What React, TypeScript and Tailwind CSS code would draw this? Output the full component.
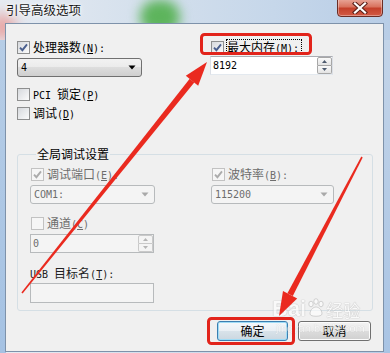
import React from "react";

const CJK = "font-['Noto_Sans_CJK_SC',sans-serif] text-[12px] leading-[14px]";
const LAT = "font-['DejaVu_Sans_Mono',monospace] text-[10px] leading-[14px]";

function Txt({ t, className = "" }: { t: string; className?: string }) {
  const toks: { s: string; c: boolean; u: boolean }[] = [];
  for (let i = 0; i < t.length; i++) {
    let ch = t[i];
    let u = false;
    if (ch === "&" && i + 1 < t.length) {
      i++;
      ch = t[i];
      u = true;
    }
    const c = /[\u2e80-\u9fff\uff00-\uffef]/.test(ch);
    const last = toks[toks.length - 1];
    if (last && last.c === c && last.u === u) last.s += ch;
    else toks.push({ s: ch, c, u });
  }
  return (
    <span className={`whitespace-pre leading-[14px] ${className}`}>
      {toks.map((k, i) => (
        <span key={i} className={`${k.c ? CJK : LAT} ${k.u ? "underline underline-offset-[1px]" : ""}`}>
          {k.s}
        </span>
      ))}
    </span>
  );
}

function Check({ on, dis }: { on?: boolean; dis?: boolean }) {
  return (
    <span
      className={`shrink-0 w-[13px] h-[13px] border flex items-center justify-center ${
        dis
          ? "border-[#c2c2c2] bg-[#f6f6f6]"
          : "border-[#8e8f8f] bg-[linear-gradient(135deg,#d6d9dd,#fbfbfb)]"
      }`}
    >
      {on && (
        <svg width="11" height="11" viewBox="0 0 11 11">
          <path
            d="M2 5.6 L4.4 8.2 L9 2.4"
            fill="none"
            stroke={dis ? "#acacac" : "#4a5f8e"}
            strokeWidth="1.9"
          />
        </svg>
      )}
    </span>
  );
}

function CheckRow({ t, on, dis, focus }: { t: string; on?: boolean; dis?: boolean; focus?: boolean }) {
  return (
    <div className="flex items-center h-[13px] gap-[3px]">
      <Check on={on} dis={dis} />
      <Txt
        t={t}
        className={`${dis ? "text-[#6d6d6d]" : "text-black"} ${
          focus ? "outline outline-1 outline-dotted outline-black pr-[2px]" : ""
        }`}
      />
    </div>
  );
}

function Arrow({ color }: { color: string }) {
  return (
    <svg width="8" height="5" viewBox="0 0 8 5">
      <path d="M0.5 0.5 H7.5 L4 4.5 Z" fill={color} />
    </svg>
  );
}

function Combo({ v, w, dis }: { v: string; w: string; dis?: boolean }) {
  return (
    <div
      className={`${w} h-[19px] rounded-[3px] border flex items-center justify-between pl-[3px] pr-[5px] ${
        dis
          ? "border-[#b7babc] bg-[#f4f4f4] text-[#6d6d6d]"
          : "border-[#707070] bg-[linear-gradient(#f2f2f2_0%,#ebebeb_50%,#dddddd_50%,#cfcfcf_100%)] text-black"
      }`}
    >
      <Txt t={v} />
      <Arrow color={dis ? "#a9a9a9" : "#000"} />
    </div>
  );
}

function SpinBtns({ dis }: { dis?: boolean }) {
  const b = dis
    ? "border-[#c9c9c9] bg-[#f4f4f4]"
    : "border-[#a7a7a7] bg-[linear-gradient(#fafafa,#e3e3e3)]";
  const c = dis ? "#b5b5b5" : "#4d5a6e";
  return (
    <div className="flex flex-col w-[15px] h-full">
      <div className={`flex-1 border rounded-t-[2px] flex items-center justify-center ${b}`}>
        <svg width="5" height="3" viewBox="0 0 5 3">
          <path d="M0 3 L2.5 0 L5 3 Z" fill={c} />
        </svg>
      </div>
      <div className={`flex-1 border border-t-0 rounded-b-[2px] flex items-center justify-center ${b}`}>
        <svg width="5" height="3" viewBox="0 0 5 3">
          <path d="M0 0 L5 0 L2.5 3 Z" fill={c} />
        </svg>
      </div>
    </div>
  );
}

function Spinner({ v, w, dis }: { v: string; w: string; dis?: boolean }) {
  return (
    <div
      className={`${w} h-[19px] border flex items-stretch ${
        dis
          ? "border-[#b7babc] bg-[#f4f4f4] text-[#6d6d6d]"
          : "border-[#abadb3] border-l-[#dbdfe6] border-r-[#dbdfe6] border-b-[#e3e9ef] bg-white text-black"
      }`}
    >
      <div className="flex-1 flex items-center pl-[2px]">
        <Txt t={v} />
      </div>
      <SpinBtns dis={dis} />
    </div>
  );
}

function Btn({ t, def, w }: { t: string; def?: boolean; w: string }) {
  return (
    <div
      className={`${w} h-[20px] rounded-[3px] border flex items-center justify-center ${
        def
          ? "border-[#3c7fb1] bg-[linear-gradient(#f4f8fb_0%,#e9eff4_50%,#d9e3ea_50%,#cbd7e0_100%)] shadow-[inset_0_0_0_1px_#9fdcf6]"
          : "border-[#707070] bg-[linear-gradient(#f2f2f2_0%,#ebebeb_50%,#dddddd_50%,#cfcfcf_100%)] shadow-[inset_0_0_0_1px_#fcfcfc]"
      }`}
    >
      <Txt t={t} className="text-black" />
    </div>
  );
}

function CloseBtn() {
  return (
    <div className="mr-[7px] -mt-[2px] w-[46px] h-[19px] rounded-b-[4px] border border-[#6b2c24] bg-[linear-gradient(#e9a89b_0%,#d9735f_45%,#c4402b_55%,#d25a44_100%)] shadow-[inset_0_0_0_1px_rgba(255,255,255,0.35)] flex items-center justify-center">
      <svg width="16" height="12" viewBox="0 0 16 12">
        <path d="M3 1.5 L13 10.5 M13 1.5 L3 10.5" stroke="#5a2019" strokeWidth="4.2" strokeLinecap="square" />
        <path d="M3 1.5 L13 10.5 M13 1.5 L3 10.5" stroke="#ffffff" strokeWidth="2.2" strokeLinecap="square" />
      </svg>
    </div>
  );
}

export default function App() {
  return (
    <div className="relative w-[390px] h-[353px] overflow-hidden text-[12px] leading-[14px] bg-[linear-gradient(90deg,#e6ebf2_0%,#d3dfec_40%,#c6d7ea_70%,#b8cde6_100%)]">
      {/* aero glass blur blobs */}
      <div className="absolute left-[140px] top-[0px] w-[40px] h-[34px] rounded-full bg-[#5db45c] blur-[6px]" />
      <div className="absolute -left-[10px] top-[14px] w-[26px] h-[26px] rounded-full bg-[#e7a4a2] blur-[7px]" />
      <div className="absolute left-0 top-[40px] w-[6px] h-[313px] bg-[linear-gradient(#b6cde6,#a5c2e3)]" />
      <div className="absolute right-0 top-[40px] w-[6px] h-[313px] bg-[linear-gradient(#c3d4e8,#a9c4e4)]" />

      <div className="relative flex flex-col h-full">
        <div className="h-[23px] shrink-0 flex items-start justify-between">
          <span className="pl-[6px] pt-[3px] font-['Noto_Sans_CJK_SC',sans-serif] text-[12.5px] leading-[14px] text-[#1b1b1b] [text-shadow:0_0_6px_#fff,0_0_3px_#fff]">
            引导高级选项
          </span>
          <CloseBtn />
        </div>

        <div className="ml-[5px] w-[379px] h-[329px] border border-[#7e92aa] bg-[#f0f0f0] flex flex-col">
          {/* top options */}
          <div className="flex pl-[11px] pt-[17px]">
            <div className="w-[193px] flex flex-col">
              <CheckRow t="处理器数(&N):" on />
              <div className="mt-[4px]">
                <Combo v="4" w="w-[125px]" />
              </div>
              <div className="mt-[11px]">
                <CheckRow t="PCI 锁定(&P)" />
              </div>
              <div className="mt-[6px]">
                <CheckRow t="调试(&D)" />
              </div>
            </div>
            <div className="flex flex-col">
              <div className="pl-[1px]">
                <CheckRow t="最大内存(&M):" on focus />
              </div>
              <div className="mt-[2px]">
                <Spinner v="8192" w="w-[123px]" />
              </div>
            </div>
          </div>

          {/* group box */}
          <fieldset className="ml-[11px] w-[356px] mt-[27px] border border-[#d5dfe5] rounded-[3px] pl-[12px] pb-[7px] pt-[6px]">
            <legend className="ml-[6px] px-[1px] text-[12px] leading-[14px]">
              <Txt t="全局调试设置" className="text-black" />
            </legend>
            <div className="flex">
              <div className="w-[181px] flex flex-col">
                <div className="pl-[1px]">
                  <CheckRow t="调试端口(&E):" on dis />
                </div>
                <div className="mt-[4px]">
                  <Combo v="COM1:" w="w-[125px]" dis />
                </div>
                <div className="mt-[13px] pl-[1px]">
                  <CheckRow t="通道(&C)" dis />
                </div>
                <div className="mt-[4px]">
                  <Spinner v="0" w="w-[124px]" dis />
                </div>
                <div className="mt-[14px] h-[13px] flex items-center">
                  <Txt t="USB 目标名(&T):" className="text-[#222]" />
                </div>
                <div className="mt-[3px] w-[124px] h-[20px] border border-[#b7babc] bg-[#f4f4f4]" />
              </div>
              <div className="flex flex-col">
                <div className="pl-[1px]">
                  <CheckRow t="波特率(&B):" on dis />
                </div>
                <div className="mt-[4px]">
                  <Combo v="115200" w="w-[123px]" dis />
                </div>
              </div>
            </div>
          </fieldset>

          {/* buttons */}
          <div className="mt-[10px] flex justify-end gap-[10px] pr-[12px]">
            <Btn t="确定" def w="w-[71px]" />
            <Btn t="取消" w="w-[73px]" />
          </div>
        </div>
      </div>

      {/* baidu watermark */}
      <div className="absolute left-[272px] top-[298px] flex flex-col items-start pointer-events-none opacity-60">
        <div className="flex items-end leading-none">
          <span className="font-['Liberation_Sans',sans-serif] text-[22px] leading-[22px] font-bold text-white [text-shadow:0_0_1px_#9a9a9a,0_0_1px_#9a9a9a]">Bai</span>
          <svg width="20" height="20" viewBox="0 0 20 20" className="mb-[2px]">
            <g fill="#fff" stroke="#a0a0a0" strokeWidth="0.7">
              <ellipse cx="5" cy="6" rx="2.2" ry="2.8" />
              <ellipse cx="10" cy="3.5" rx="2.2" ry="2.8" />
              <ellipse cx="15" cy="6" rx="2.2" ry="2.8" />
              <path d="M4 16 C4 11 8 9 10 9 C12 9 16 11 16 16 C16 19 4 19 4 16 Z" />
            </g>
          </svg>
          <span className="font-['Noto_Sans_CJK_SC',sans-serif] text-[17px] leading-[20px] text-white [text-shadow:0_0_1px_#9a9a9a,0_0_1px_#9a9a9a]">经验</span>
        </div>
        <span className="font-['Liberation_Sans',sans-serif] text-[11px] leading-[12px] text-white [text-shadow:0_0_1px_#a0a0a0] mt-[2px] ml-[4px]">
          jingyan.baidu.com
        </span>
      </div>

      {/* red annotations */}
      <svg className="absolute inset-0 pointer-events-none" width="390" height="353" viewBox="0 0 390 353">
        <rect x="201.5" y="34.5" width="109" height="19" rx="3" fill="none" stroke="#e2241b" strokeWidth="3" />
        <rect x="208.5" y="318.5" width="85" height="25" rx="3" fill="none" stroke="#e2241b" strokeWidth="3" />
        <polygon points="22.6,293.5 194.3,82.6 189.7,78.8 21.4,292.5" fill="#ea2a1f" />
        <polygon points="207,62 198.2,85.7 185.8,75.7" fill="#ea2a1f" />
        <polygon points="362.7,157.4 292.8,296.1 287.4,293.3 361.3,156.6" fill="#ea2a1f" />
        <polygon points="279,316 297.2,298.4 283,291" fill="#ea2a1f" />
      </svg>
    </div>
  );
}
